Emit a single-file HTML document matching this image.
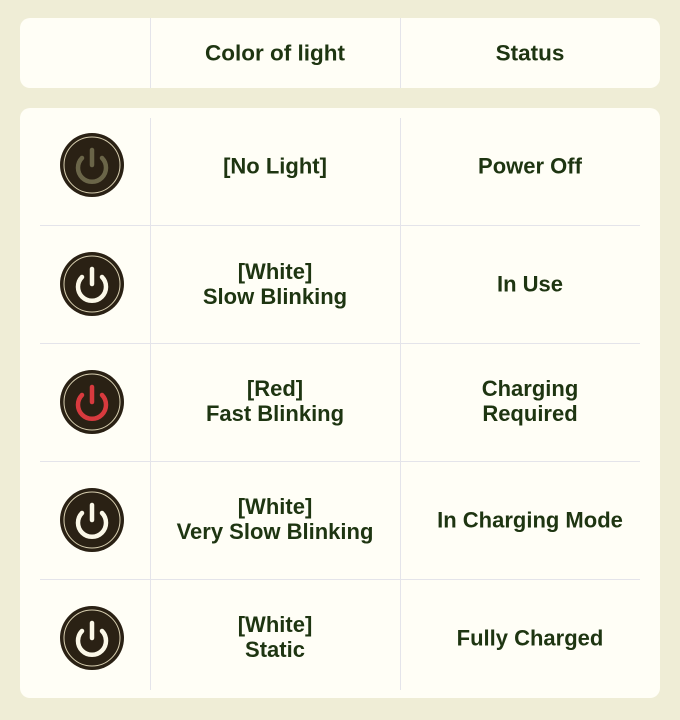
<!DOCTYPE html>
<html><head><style>
body{margin:0;width:680px;height:720px;background:#efedd6;font-family:"Liberation Sans",sans-serif;position:relative;overflow:hidden}
.card{position:absolute;left:20px;width:640px;background:#fffef6;border-radius:10px}
.t{position:absolute;color:#1e3511;font-weight:bold;font-size:22px;text-align:center;line-height:25px;transform:translateY(-50%)}
.vl{position:absolute;width:1px;background:#e4e4ea}
.hl{position:absolute;left:40px;width:600px;height:1px;background:#e4e4ea}
svg{position:absolute}
</style></head><body>
<div class="card" style="top:18px;height:70px"></div>
<div class="vl" style="left:150px;top:18px;height:70px"></div>
<div class="vl" style="left:400px;top:18px;height:70px"></div>
<div class="t" style="left:150px;width:250px;top:53px;font-size:22.5px">Color of light</div>
<div class="t" style="left:400px;width:260px;top:53px;font-size:22.5px">Status</div>
<div class="card" style="top:108px;height:590px"></div>
<div class="vl" style="left:150px;top:118px;height:572px"></div>
<div class="vl" style="left:400px;top:118px;height:572px"></div>
<div class="hl" style="top:225px"></div>
<div class="hl" style="top:343px"></div>
<div class="hl" style="top:461px"></div>
<div class="hl" style="top:579px"></div>

<svg style="left:60px;top:133px" width="64" height="64" viewBox="0 0 64 64"><circle cx="32" cy="32" r="32" fill="#2a2114"/><circle cx="32" cy="32" r="28" fill="none" stroke="#d8cfb0" stroke-width="1"/><path d="M22 25A14 14 0 1 0 42 25" fill="none" stroke="#6a6548" stroke-width="4.5" stroke-linecap="round"/><path d="M32 17V32" stroke="#6a6548" stroke-width="4.5" stroke-linecap="round"/></svg>
<svg style="left:60px;top:252px" width="64" height="64" viewBox="0 0 64 64"><circle cx="32" cy="32" r="32" fill="#2a2114"/><circle cx="32" cy="32" r="28" fill="none" stroke="#d8cfb0" stroke-width="1"/><path d="M22 25A14 14 0 1 0 42 25" fill="none" stroke="#fbf8e8" stroke-width="4.5" stroke-linecap="round"/><path d="M32 17V32" stroke="#fbf8e8" stroke-width="4.5" stroke-linecap="round"/></svg>
<svg style="left:60px;top:370px" width="64" height="64" viewBox="0 0 64 64"><circle cx="32" cy="32" r="32" fill="#2a2114"/><circle cx="32" cy="32" r="28" fill="none" stroke="#d8cfb0" stroke-width="1"/><path d="M22 25A14 14 0 1 0 42 25" fill="none" stroke="#d83a3e" stroke-width="4.5" stroke-linecap="round"/><path d="M32 17V32" stroke="#d83a3e" stroke-width="4.5" stroke-linecap="round"/></svg>
<svg style="left:60px;top:488px" width="64" height="64" viewBox="0 0 64 64"><circle cx="32" cy="32" r="32" fill="#2a2114"/><circle cx="32" cy="32" r="28" fill="none" stroke="#d8cfb0" stroke-width="1"/><path d="M22 25A14 14 0 1 0 42 25" fill="none" stroke="#fbf8e8" stroke-width="4.5" stroke-linecap="round"/><path d="M32 17V32" stroke="#fbf8e8" stroke-width="4.5" stroke-linecap="round"/></svg>
<svg style="left:60px;top:606px" width="64" height="64" viewBox="0 0 64 64"><circle cx="32" cy="32" r="32" fill="#2a2114"/><circle cx="32" cy="32" r="28" fill="none" stroke="#d8cfb0" stroke-width="1"/><path d="M22 25A14 14 0 1 0 42 25" fill="none" stroke="#fbf8e8" stroke-width="4.5" stroke-linecap="round"/><path d="M32 17V32" stroke="#fbf8e8" stroke-width="4.5" stroke-linecap="round"/></svg>

<div class="t" style="left:150px;width:250px;top:166px">[No Light]</div>
<div class="t" style="left:400px;width:260px;top:166px">Power Off</div>
<div class="t" style="left:150px;width:250px;top:284px">[White]<br>Slow Blinking</div>
<div class="t" style="left:400px;width:260px;top:284px">In Use</div>
<div class="t" style="left:150px;width:250px;top:401px">[Red]<br>Fast Blinking</div>
<div class="t" style="left:400px;width:260px;top:401px">Charging<br>Required</div>
<div class="t" style="left:150px;width:250px;top:519px">[White]<br>Very Slow Blinking</div>
<div class="t" style="left:400px;width:260px;top:520px">In Charging Mode</div>
<div class="t" style="left:150px;width:250px;top:637px">[White]<br>Static</div>
<div class="t" style="left:400px;width:260px;top:638px">Fully Charged</div>
</body></html>
